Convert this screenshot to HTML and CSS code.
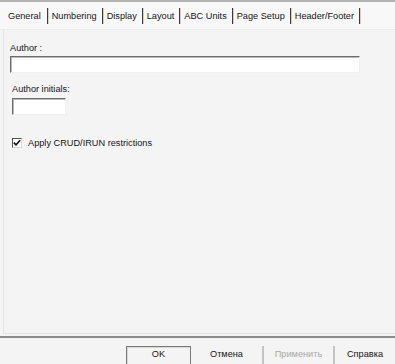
FILE: index.html
```html
<!DOCTYPE html>
<html lang="en">
<head>
    <meta charset="UTF-8">
    <meta name="viewport" content="width=device-width, initial-scale=1.0">
    <title>Options</title>
    <link rel="stylesheet" href="styles.css">
</head>
<body>

    <!-- Tab strip -->
    <nav class="tabs">
        <span class="tab active">General</span>
        <span class="tab">Numbering</span>
        <span class="tab">Display</span>
        <span class="tab">Layout</span>
        <span class="tab">ABC Units</span>
        <span class="tab">Page Setup</span>
        <span class="tab">Header/Footer</span>
    </nav>

    <!-- General page -->
    <section class="panel">
        <label class="field-label" for="author">Author :</label>
        <input class="field wide" type="text" id="author">

        <label class="field-label second" for="initials">Author initials:</label>
        <input class="field short" type="text" id="initials">

        <div class="check-row">
            <span class="checkbox">
                <svg width="8" height="8" viewBox="0 0 8 8">
                    <path d="M0.8 3.6 L3 5.8 L7.2 1.2" fill="none" stroke="#111" stroke-width="1.6"/>
                </svg>
            </span>
            <span>Apply CRUD/IRUN restrictions</span>
        </div>
    </section>

    <!-- Dialog buttons -->
    <footer class="buttons">
        <button class="btn default" type="button">OK</button>
        <button class="btn" type="button">Отмена</button>
        <button class="btn sep disabled" type="button">Применить</button>
        <button class="btn sep" type="button">Справка</button>
    </footer>

</body>
</html>
```

FILE: styles.css
```css
/* General styling */
html, body {
    margin: 0;
    width: 395px;
    height: 364px;
    overflow: hidden;
}

body {
    background-color: #f4f4f4;
    font-family: "Liberation Sans", Arial, sans-serif;
    font-size: 9.2px;
    color: #151515;
}

/* Tab strip */
.tabs {
    display: flex;
    align-items: center;
    height: 27px;
    padding-left: 4px;
    border-top: 2px solid #b4b4b4;
    background-color: #f8f8f8;
    border-bottom: 1px solid #ececec;
}

.tab {
    line-height: 16px;
    padding: 0 5px 0 4px;
    border-right: 1px solid #3a3a3a;
    box-shadow: 1px 0 0 #d0d0d0;
}

.tab.active {
    padding-right: 6px;
}

/* Page panel */
.panel {
    margin-left: 3px;
    height: 303px;
    border-left: 1px solid #e4e4e4;
    border-bottom: 1px solid #e4e4e4;
    padding-left: 6px;
    display: flex;
    flex-direction: column;
    align-items: flex-start;
}

.field-label {
    line-height: 12px;
    margin-top: 12px;
}

.field-label.second {
    margin-top: 10px;
    margin-left: 2px;
}

.field {
    box-sizing: border-box;
    height: 17px;
    margin: 2px 0 0 0;
    padding: 0;
    background-color: #fff;
    border: 1px solid;
    border-color: #6c6c6c #f0f0f0 #f0f0f0 #6c6c6c;
    box-shadow: inset 1px 1px 0 #b8b8b8;
    font: inherit;
}

.field.wide {
    width: 350px;
}

.field.short {
    width: 54px;
    margin-left: 2px;
    margin-top: 3px;
}

.check-row {
    display: flex;
    align-items: center;
    gap: 6px;
    margin: 22px 0 0 2px;
    line-height: 12px;
}

.checkbox {
    box-sizing: border-box;
    width: 10px;
    height: 10px;
    display: flex;
    align-items: center;
    justify-content: center;
    background-color: #fff;
    border: 1px solid;
    border-color: #555 #dcdcdc #dcdcdc #555;
}

/* Button row */
.buttons {
    margin-top: 2px;
    border-top: 2px solid #8c8c8c;
    display: flex;
    padding: 8px 0 0 126px;
}

.btn {
    box-sizing: border-box;
    height: 18px;
    padding: 0 0 3px 0;
    background: transparent;
    border: none;
    font: inherit;
    color: #151515;
    text-align: center;
}

.btn.default {
    width: 65px;
    border: 1px solid #7a7a7a;
    border-bottom: none;
    box-shadow: inset 1px 1px 0 #d8d8d8;
}

.btn:nth-child(2) {
    width: 71px;
}

.btn:nth-child(3) {
    width: 71px;
}

.btn.sep {
    border-left: 2px solid #c4c4c4;
}

.btn:last-child {
    flex: 1;
}

.btn.disabled {
    color: #a8a8a8;
}
```
